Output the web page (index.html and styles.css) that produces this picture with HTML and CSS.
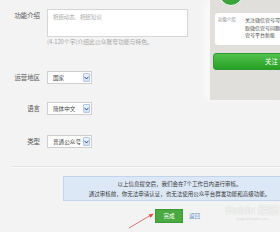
FILE: index.html
```html
<!DOCTYPE html>
<html lang="zh">
<head>
<meta charset="utf-8">
<link rel="stylesheet" href="styles.css">
</head>
<body>
<div class="page">
  <div class="top">
    <div class="form">
      <div class="row row-intro">
        <div class="label">功能介绍</div>
        <div class="textarea">相组动态、相组知识</div>
      </div>
      <div class="help">(4-120个字)介绍此公众账号功能与特色。</div>
      <div class="row row-region">
        <div class="label">运营地区</div>
        <div class="select"><span class="val">国家</span><span class="arr"><svg width="5" height="4" viewBox="0 0 5 4"><polyline points="0.5,0.8 2.5,3 4.5,0.8" fill="none" stroke="#2a4f9a" stroke-width="1"/></svg></span></div>
      </div>
      <div class="row row-lang">
        <div class="label">语言</div>
        <div class="select"><span class="val">简体中文</span><span class="arr"><svg width="5" height="4" viewBox="0 0 5 4"><polyline points="0.5,0.8 2.5,3 4.5,0.8" fill="none" stroke="#2a4f9a" stroke-width="1"/></svg></span></div>
      </div>
      <div class="row row-type">
        <div class="label">类型</div>
        <div class="select"><span class="val">普通公众号</span><span class="arr"><svg width="5" height="4" viewBox="0 0 5 4"><polyline points="0.5,0.8 2.5,3 4.5,0.8" fill="none" stroke="#2a4f9a" stroke-width="1"/></svg></span></div>
      </div>
    </div>
    <div class="preview">
      <div class="avatar"></div>
      <div class="card">
        <div class="card-label">功能介绍</div>
        <div class="card-text">关注微信官号可<br>取微信官号问题<br>官号平台新能</div>
      </div>
      <div class="follow">关注</div>
    </div>
  </div>
  <div class="divider"></div>
  <div class="notice">
    <div>以上信息提交后，我们会在7个工作日内进行审核。</div>
    <div>通过审核前，你无法申请认证，也无法使用公众平台群发功能和高级功能。</div>
  </div>
  <div class="actions">
    <div class="btn">完成</div>
    <div class="back">返回</div>
  </div>
  <svg class="arrow" width="280" height="232" viewBox="0 0 280 232">
    <line x1="129" y1="228" x2="151" y2="215" stroke="#d9534f" stroke-width="0.8"/>
    <polygon points="154,213.5 148.5,214.6 150.6,217.8" fill="#d9534f"/>
  </svg>
  <div class="watermark">Baidu 经验<div class="wm-url">jingyan.baidu.com</div></div>
</div>
</body>
</html>
```

FILE: styles.css
```css
* { box-sizing: border-box; }
html, body { margin: 0; padding: 0; }
body {
  background: #f3f3f3;
  font-family: "Noto Sans CJK SC", "Liberation Sans", sans-serif;
  color: #555;
}
.page {
  position: relative;
  width: 280px;
  height: 232px;
  overflow: hidden;
  background: #f3f3f3;
}
.top {
  display: flex;
  align-items: flex-start;
  height: 160px;
}
.form {
  width: 210px;
  flex: none;
  padding-top: 9px;
}
.row {
  display: flex;
  align-items: center;
  gap: 7px;
}
.row-intro { align-items: flex-start; }
.label {
  width: 40px;
  flex: none;
  text-align: right;
  font-size: 6.4px;
  line-height: 8px;
  color: #555;
  white-space: nowrap;
}
.row-intro .label { padding-top: 3px; }
.textarea {
  width: 141px;
  height: 28px;
  background: #fff;
  border: 1px solid #d6d6d6;
  font-size: 5.4px;
  line-height: 8px;
  color: #aaa;
  padding: 3px 0 0 5px;
  white-space: nowrap;
}
.help {
  margin-left: 47px;
  margin-top: 1px;
  font-size: 5.8px;
  line-height: 8px;
  color: #a6a6a6;
  white-space: nowrap;
}
.row-region { margin-top: 25px; }
.row-lang { margin-top: 18px; }
.row-type { margin-top: 20px; }
.select {
  width: 45px;
  height: 13px;
  background: #fff;
  border: 1px solid #cfcfcf;
  display: flex;
  align-items: center;
  justify-content: space-between;
  padding: 0 1px 0 5px;
}
.val {
  font-size: 5.6px;
  line-height: 8px;
  color: #444;
  white-space: nowrap;
}
.arr {
  width: 7px;
  height: 9px;
  border: 1px solid #b3c8e8;
  background: linear-gradient(#eef4fd, #d3e1f6);
  border-radius: 1px;
  display: flex;
  align-items: center;
  justify-content: center;
}
.arr svg { display: block; }
.preview {
  width: 74px;
  flex: none;
  height: 100px;
  background: #e1dfdc;
  box-shadow: -6px 0 6px rgba(255, 255, 255, 0.55);
  padding: 0 0 0 4px;
}
.avatar {
  width: 24px;
  height: 24px;
  border-radius: 50%;
  background: #39a53a;
  border: 1.5px solid #fff;
  margin: -18px 0 0 5px;
}
.card {
  margin-top: 7px;
  margin-left: 1px;
  width: 80px;
  height: 32px;
  background: #fff;
  border-radius: 3px;
  display: flex;
  padding: 3px 0 0 3px;
}
.card-label {
  width: 27px;
  flex: none;
  font-size: 4.4px;
  line-height: 7.5px;
  color: #8a8a8a;
  white-space: nowrap;
}
.card-text {
  font-size: 5px;
  line-height: 7.5px;
  color: #444;
  white-space: nowrap;
}
.follow {
  margin-top: 8px;
  margin-left: -1px;
  width: 80px;
  height: 17px;
  border: 1px solid #2f9a2d;
  border-radius: 3px;
  background: linear-gradient(#52c14d, #25a023);
  color: #fff;
  font-size: 6.4px;
  line-height: 15px;
  padding-left: 51px;
  white-space: nowrap;
}
.divider {
  margin: 6px 0 0 12px;
  height: 0;
  border-top: 1px solid #e0e0e0;
  box-shadow: 0 1px 0 #fbfbfb;
}
.notice {
  margin: 9px 0 0 63px;
  width: 233px;
  height: 25px;
  background: #dde8f6;
  border: 1px solid #c2d4ec;
  text-align: center;
  font-size: 5.5px;
  line-height: 10px;
  color: #333;
  padding-top: 2px;
  white-space: nowrap;
}
.actions {
  display: flex;
  align-items: center;
  gap: 6px;
  margin: 8px 0 0 155px;
}
.btn {
  width: 28px;
  height: 14px;
  background: #4aa941;
  border: 1px solid #3c9a35;
  color: #fff;
  font-size: 5.6px;
  line-height: 12px;
  text-align: center;
}
.back {
  font-size: 5.6px;
  line-height: 8px;
  color: #6f93c9;
}
.arrow {
  position: absolute;
  left: 0;
  top: 0;
  pointer-events: none;
}
.watermark {
  position: absolute;
  left: 226px;
  top: 204px;
  font-family: "Liberation Sans", "Noto Sans CJK SC", sans-serif;
  font-size: 10.5px;
  font-weight: bold;
  line-height: 12px;
  color: rgba(255, 255, 255, 0.75);
  text-shadow: 0 0 1px rgba(150, 150, 150, 0.5);
  white-space: nowrap;
}
.wm-url {
  font-size: 4px;
  line-height: 5px;
  font-weight: normal;
  text-align: center;
  color: rgba(200, 200, 200, 0.6);
  text-shadow: none;
}
```
